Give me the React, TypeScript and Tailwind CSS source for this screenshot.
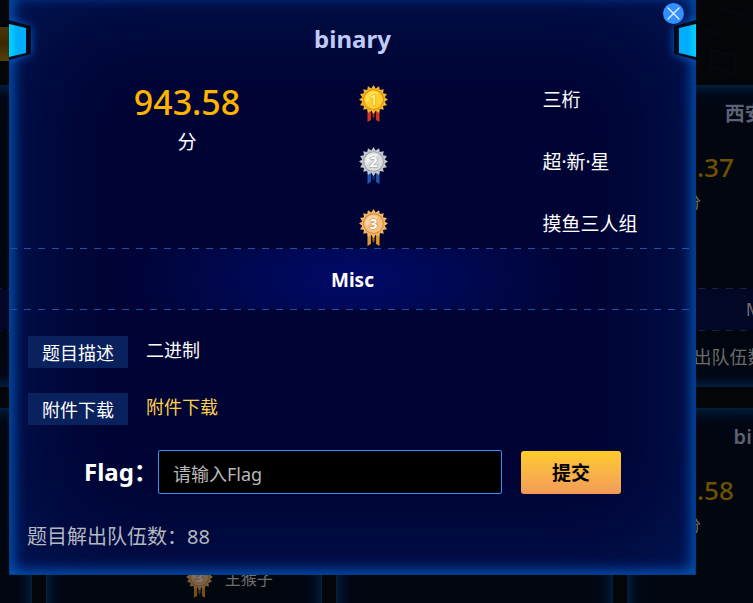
import type { ReactNode } from "react";

type Place = 1 | 2 | 3;

const medalColors = {
  1: { rim: "#f2b52c", edge: "#e08a12", face: "#ffcf2e", shine: "#ffe14f", digit: "#fff27a", line: "#e89a10", ribbon: "#d8351c", dark: "#8c1c14" },
  2: { rim: "#c3c8cc", edge: "#9da4aa", face: "#d9dcde", shine: "#eceeef", digit: "#ffffff", line: "#8f979d", ribbon: "#1d58b4", dark: "#0d3478" },
  3: { rim: "#f0b769", edge: "#d98a33", face: "#f3bf83", shine: "#f8d3a4", digit: "#ffffff", line: "#cf7f2a", ribbon: "#e39a22", dark: "#99600e" },
};

const starPoints = Array.from({ length: 32 }, (_, i) => {
  const r = i % 2 === 0 ? 14.5 : 11.4;
  const a = (i * Math.PI) / 16 - Math.PI / 2;
  return `${(14.5 + r * Math.cos(a)).toFixed(2)},${(14.6 + r * Math.sin(a)).toFixed(2)}`;
}).join(" ");

function Medal({ place, className }: { place: Place; className: string }) {
  const c = medalColors[place];
  return (
    <svg viewBox="0 0 29 38" className={className} role="img" aria-label={`${place}`}>
      <path d="M8.5 24v13l3.4-2V24zM20.5 24v13l-3.4-2V24z" fill={c.ribbon} />
      <path d="M13.2 26v5l1.3 3 1.3-3v-5z" fill={c.dark} />
      <polygon points={starPoints} fill={c.rim} />
      <circle cx="14.5" cy="14.6" r="10.4" fill={c.edge} />
      <circle cx="14.5" cy="14.6" r="9.4" fill={c.face} />
      <path d="M7.2 17.6a7.8 7.8 0 0 1 12-9.4z" fill={c.shine} />
      <text
        x="14.5"
        y="19.8"
        textAnchor="middle"
        fontSize="14"
        fontWeight="700"
        fill={c.digit}
        stroke={c.line}
        strokeWidth="1"
        paintOrder="stroke"
      >
        {place}
      </text>
    </svg>
  );
}

function DashedLine({ className = "" }: { className?: string }) {
  return (
    <div
      className={`h-px bg-[repeating-linear-gradient(90deg,#1c539f_0_7px,transparent_7px_14px)] ${className}`}
    />
  );
}

type CardProps = {
  title?: string;
  score?: string;
  category?: string;
  solved?: string;
  third?: string;
};

function ChallengeCard({ title, score, category, solved, third }: CardProps) {
  return (
    <article className="flex h-[302px] flex-col border border-[#02203c] bg-[#020612]/80 shadow-[inset_0_0_14px_#02305c,inset_0_0_50px_#020c22]">
      <h3 className="h-11 pt-3 text-center text-[20px] leading-8 font-semibold text-[#5c6274]">{title}</h3>
      <div className="grid h-[158px] grid-cols-2 pt-5">
        {score && (
          <div className="pr-[6px] text-center">
            <p className="text-[26px] leading-[34px] font-medium text-[#705100]">{score}</p>
            <p className="text-[16px] leading-9 text-[#6e6e6e]">分</p>
          </div>
        )}
        {third && (
          <div className="col-start-2 flex items-end gap-3 pb-3 pl-0.5 text-[16px] leading-10 text-[#6e6e6e]">
            <Medal place={3} className="h-9 w-[27px] opacity-50" />
            <span>{third}</span>
          </div>
        )}
      </div>
      <DashedLine className="opacity-40" />
      <p className="h-[41px] bg-[#020726] text-center text-[18px] leading-[41px] text-[#6e6e6e]">{category}</p>
      <DashedLine className="opacity-40" />
      <p className="px-3 text-[18px] leading-[52px] whitespace-nowrap text-[#6a6a6a]">{solved}</p>
    </article>
  );
}

const teams = ["三桁", "超·新·星", "摸鱼三人组"];
const cards: CardProps[] = [
  {},
  {},
  {},
  { title: "西安加油", score: "943.37", category: "Misc", solved: "题目解出队伍数：88" },
  {},
  { third: "王猴子" },
  {},
  { title: "binary", score: "943.58" },
];

function SideNotch({ className }: { className: string }) {
  return (
    <svg viewBox="0 0 40 70" className={`pointer-events-none absolute top-[13px] h-[70px] w-10 ${className}`} aria-hidden="true">
      <defs>
        <linearGradient id="notch" x1="0" x2="1">
          <stop offset="0" stopColor="#00d4ff" />
          <stop offset="0.5" stopColor="#00acff" />
          <stop offset="1" stopColor="#00b0ff" />
        </linearGradient>
        <filter id="notch-glow" x="-60%" y="-50%" width="220%" height="200%">
          <feGaussianBlur stdDeviation="4" />
        </filter>
      </defs>
      <path d="M-4 14L22 21v27L-4 55z" fill="#0062d8" filter="url(#notch-glow)" />
      <path d="M0 14l22 6v28L0 54z" fill="#020a1c" />
      <path d="M0 18l17 4v25L0 51z" fill="url(#notch)" />
    </svg>
  );
}

function InfoRow({ label, children }: { label: string; children: ReactNode }) {
  return (
    <div className="flex h-8 gap-[18px] text-[18px]">
      <dt className="w-[100px] bg-[#09215d] text-center leading-[34px] text-white">{label}</dt>
      <dd className="leading-7 text-white">{children}</dd>
    </div>
  );
}

function ChallengeDialog() {
  return (
    <section
      role="dialog"
      aria-labelledby="dialog-title"
      className="relative w-full border border-[#013d82] bg-[#000434] pb-[21px] shadow-[inset_0_0_14px_3px_#0058c0,inset_0_0_120px_#031b5c]"
    >
      <SideNotch className="-left-px" />
      <SideNotch className="-right-px -scale-x-100" />
      <button type="button" aria-label="关闭" className="absolute top-[10px] right-[11px] size-[21px] rounded-full bg-[#338eff]">
        <svg viewBox="0 0 21 21" className="size-[21px]" stroke="#e8f2ff" strokeWidth="1.3" strokeLinecap="round">
          <path d="M5 5l11 11M16 5L5 16" />
        </svg>
      </button>

      <h2 id="dialog-title" className="pt-[26px] text-center text-[24px] leading-10 font-bold text-[#c0cbfa]">
        binary
      </h2>

      <div className="grid grid-cols-[350fr_337fr] pt-[26px]">
        <div className="pl-[5px] text-center">
          <p className="text-[34px] leading-[34px] font-medium text-[#ffb400]">943.58</p>
          <p className="text-[19px] leading-[46px] text-white">分</p>
        </div>
        <ol className="flex flex-col gap-6">
          {teams.map((team, i) => (
            <li key={team} className="grid h-[38px] grid-cols-[184fr_153fr] text-[19px] leading-[30px] whitespace-nowrap text-white">
              <Medal place={(i + 1) as Place} className="h-[38px] w-[29px]" />
              <span>{team}</span>
            </li>
          ))}
        </ol>
      </div>

      <div className="mt-px">
        <DashedLine />
        <p className="bg-[radial-gradient(ellipse_240px_100px_at_center,#000a68,transparent)] pt-0.5 text-center text-[19px] leading-[58px] font-bold text-white">
          Misc
        </p>
        <DashedLine />
      </div>

      <dl className="flex flex-col gap-[25px] px-[18px] pt-[26px]">
        <InfoRow label="题目描述">二进制</InfoRow>
        <InfoRow label="附件下载">
          <a href="#attachment" className="text-[#ffd04b]">附件下载</a>
        </InfoRow>
      </dl>

      <form className="flex items-center px-[74px] pt-[25px]" onSubmit={(e) => e.preventDefault()}>
        <label htmlFor="flag" className="w-[74px] text-[24px] leading-10 font-bold whitespace-nowrap text-white">
          Flag：
        </label>
        <input
          id="flag"
          type="text"
          placeholder="请输入Flag"
          className="h-11 min-w-0 grow rounded-[2px] border border-[#338eff] bg-black px-[14px] pt-1 text-[18px] text-white placeholder:text-[#b8b8b8]"
        />
        <button
          type="submit"
          className="ml-[19px] h-[43px] w-[100px] rounded-[3px] bg-linear-to-b from-[#ffcc28] to-[#f29a58] pt-0.5 text-[19px] font-bold text-black"
        >
          提交
        </button>
      </form>

      <p className="px-[17px] pt-[27px] text-[20px] leading-8 text-[#b4b7c0]">题目解出队伍数：88</p>
    </section>
  );
}

export default function App() {
  return (
    <main className="relative h-screen overflow-hidden bg-[#030509] font-['Noto_Sans','Noto_Sans_CJK_SC',sans-serif]">
      <div aria-hidden="true">
        <svg className="absolute inset-0 size-full" fill="none" stroke="#080c14" strokeWidth="1">
          <path d="M690 285L753 248M712 50l24 7-2 16-24-6zM722 8l31 13M705 30l14 4M0 20l9-10M0 455l9-20M500 603l70-28M540 575l60-4 153-8M250 575c10 14 12 20 8 28M425 575l22 18M735 480l-10 50M696 420l57-8" />
        </svg>
        <div className="mt-[27px] h-[34px] w-[9px] bg-linear-to-b from-[#4a360e] via-[#3a2800] to-[#57400f]" />
        <div className="relative mt-6 -ml-[245px] grid w-[1148px] grid-cols-4 gap-x-[14px] gap-y-[21px]">
          {cards.map((card, i) => (
            <ChallengeCard key={i} {...card} />
          ))}
        </div>
      </div>
      <div className="absolute inset-x-0 -top-2 flex pr-[57px] pl-[9px]">
        <ChallengeDialog />
      </div>
    </main>
  );
}
